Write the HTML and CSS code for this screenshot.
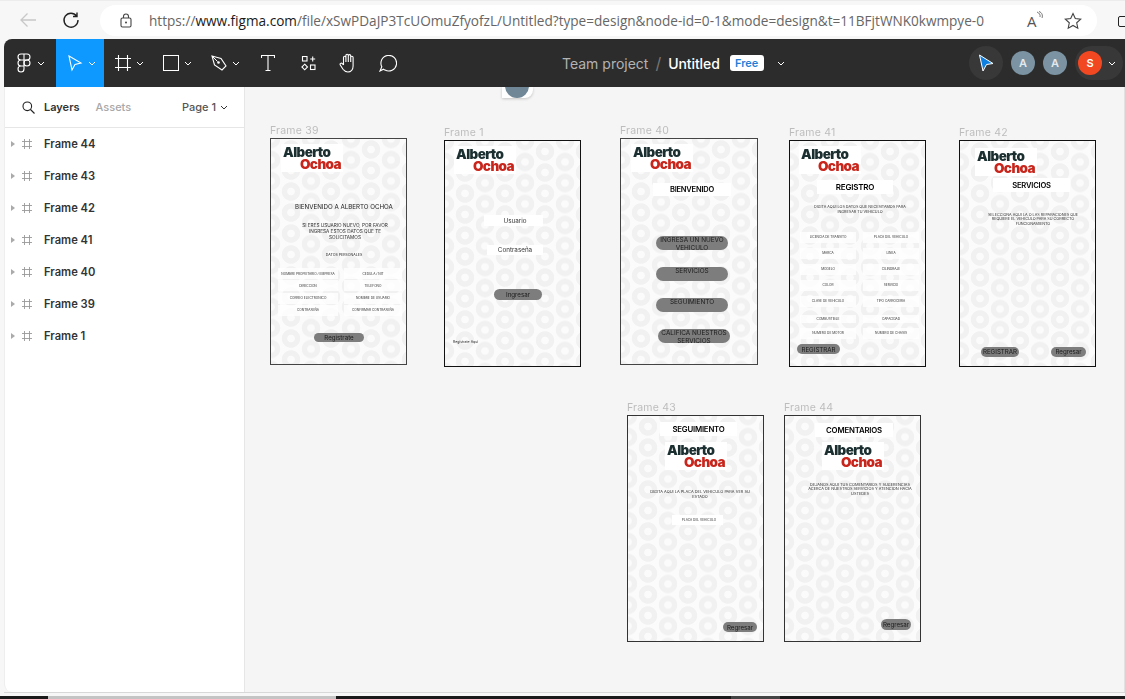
FILE: index.html
```html
<!DOCTYPE html>
<html lang="es">
<head>
<meta charset="UTF-8" />
<title>Untitled - Figma</title>
<link rel="stylesheet" href="styles.css">
</head>
<body>

<div class="browser-bar">
  <svg class="nav-back" width="18" height="16" viewBox="0 0 18 16"><path d="M17 8H2M8.500 1.500L2 8l6.500 6.500" fill="none" stroke="#c8c8c8" stroke-width="1.300"/></svg>
  <svg class="nav-reload" width="18" height="18" viewBox="0 0 18 18"><path d="M14.600 5A7 7 0 1 0 16 9M15 1.500V5.500H11" fill="none" stroke="#222" stroke-width="1.400"/></svg>
  <div class="url-pill">
    <svg class="lock" width="12" height="15" viewBox="0 0 12 15"><rect x="1" y="5" width="10" height="9" rx="1.500" fill="none" stroke="#444" stroke-width="1.100"/><path d="M3.500 5V3.500a2.500 2.500 0 0 1 5 0V5" fill="none" stroke="#444" stroke-width="1.100"/><circle cx="6" cy="9.500" r="1" fill="#444"/></svg>
    <span class="url">https://<b>www.figma.com</b>/file/xSwPDaJP3TcUOmuZfyofzL/Untitled?type=design&amp;node-id=0-1&amp;mode=design&amp;t=11BFjtWNK0kwmpye-0</span>
    <span class="read-aloud">A<svg width="7" height="9" viewBox="0 0 7 9"><path d="M1 1c2.500 1 3.500 3 3 5M3 .5c3 1 4 4 3 6.500" fill="none" stroke="#555" stroke-width=".8"/></svg></span>
    <svg class="star" width="18" height="18" viewBox="0 0 18 18"><path d="M9 1.500l2.300 5 5.400.6-4 3.700 1.100 5.400L9 13.500l-4.800 2.700 1.100-5.400-4-3.700 5.400-.6z" fill="none" stroke="#444" stroke-width="1.100"/></svg>
  </div>
  <div class="tabs-edge"></div>
</div>

<div class="app">
  <header class="toolbar">
    <div class="tools">
      <div class="tool tool-main">
        <svg width="14" height="20" viewBox="0 0 14 20"><g fill="none" stroke="#fff" stroke-width="1.100"><path d="M7 1H4a3 3 0 0 0 0 6h3zM7 1h3a3 3 0 0 1 0 6H7zM7 7H4a3 3 0 0 0 0 6h3zM7 13H4a3 3 0 1 0 3 3z"/><circle cx="10" cy="10" r="3"/></g></svg>
        <svg class="chev" width="8" height="5" viewBox="0 0 8 5"><path d="M1 1l3 3 3-3" fill="none" stroke="#fff"/></svg>
      </div>
      <div class="tool tool-wide tool-on">
        <svg width="16" height="18" viewBox="0 0 16 18"><path d="M2 2l12 7-6 1.500L5 16z" fill="none" stroke="#fff" stroke-width="1.100"/></svg>
        <svg class="chev" width="8" height="5" viewBox="0 0 8 5"><path d="M1 1l3 3 3-3" fill="none" stroke="#fff"/></svg>
      </div>
      <div class="tool tool-wide">
        <svg width="16" height="16" viewBox="0 0 16 16"><path d="M3.500 0v16M12.500 0v16M0 3.500h16M0 12.500h16" stroke="#fff" stroke-width="1.100"/></svg>
        <svg class="chev" width="8" height="5" viewBox="0 0 8 5"><path d="M1 1l3 3 3-3" fill="none" stroke="#fff"/></svg>
      </div>
      <div class="tool tool-wide">
        <svg width="16" height="16" viewBox="0 0 16 16"><rect x=".5" y=".5" width="15" height="15" fill="none" stroke="#fff"/></svg>
        <svg class="chev" width="8" height="5" viewBox="0 0 8 5"><path d="M1 1l3 3 3-3" fill="none" stroke="#fff"/></svg>
      </div>
      <div class="tool tool-wide">
        <svg width="16" height="16" viewBox="0 0 16 16"><path d="M1 1l9 2.500 5 7.500-4 4-7.500-5z" fill="none" stroke="#fff" stroke-width="1.100"/><path d="M1 1l5.500 5.500" stroke="#fff"/><circle cx="7.500" cy="7.500" r="1.300" fill="#fff"/></svg>
        <svg class="chev" width="8" height="5" viewBox="0 0 8 5"><path d="M1 1l3 3 3-3" fill="none" stroke="#fff"/></svg>
      </div>
      <div class="tool tool-narrow">
        <svg width="14" height="16" viewBox="0 0 14 16"><path d="M.5 3V.5h13V3M7 .5v15M4.500 15.500h5" fill="none" stroke="#fff" stroke-width="1.100"/></svg>
      </div>
      <div class="tool tool-narrow">
        <svg width="15" height="15" viewBox="0 0 15 15"><g fill="none" stroke="#fff" stroke-width="1.100"><rect x="1.500" y=".5" width="4.500" height="4.500"/><rect x="9.500" y="9" width="4.500" height="4.500"/><path d="M3.700 8.200l2.800 2.800-2.800 2.800L.9 11zM11.700.5v5M9.200 3h5"/></g></svg>
      </div>
      <div class="tool tool-narrow">
        <svg width="18" height="20" viewBox="0 0 18 20"><path d="M4.500 12V4.500a1.200 1.200 0 0 1 2.400 0V9M6.900 9V2.500a1.200 1.200 0 0 1 2.400 0V9M9.300 9V2.800a1.200 1.200 0 0 1 2.400 0V9M11.700 9V4.500a1.200 1.200 0 0 1 2.400 0V13c0 3.500-2.200 6-5.200 6-2.300 0-3.600-.9-4.900-2.700L1.300 12c-.8-1.300 1-2.500 2-1.400L4.500 12" fill="none" stroke="#fff" stroke-width="1.100"/></svg>
      </div>
      <div class="tool tool-narrow">
        <svg width="18" height="17" viewBox="0 0 18 17"><path d="M1 16l1.800-4.300A7.800 7.800 0 1 1 6 15a8 8 0 0 1-1.500-.8L1 16z" fill="none" stroke="#fff" stroke-width="1.100"/></svg>
      </div>
    </div>

    <div class="doc-title">
      <span class="project">Team project</span>
      <span class="slash">/</span>
      <span class="file-name">Untitled</span>
      <span class="plan">Free</span>
      <svg class="chev" width="8" height="5" viewBox="0 0 8 5"><path d="M1 1l3 3 3-3" fill="none" stroke="#fff"/></svg>
    </div>

    <div class="people">
      <div class="cursor-chip">
        <svg width="16" height="18" viewBox="0 0 16 18"><path d="M1.500 1L15 9.500 8.500 10.500 5 17z" fill="#0d7fe0" stroke="#fff" stroke-width="1"/></svg>
      </div>
      <span class="avatar">A</span>
      <span class="avatar">A</span>
      <div class="me-chip">
        <span class="avatar avatar-me">S</span>
        <svg class="chev" width="8" height="5" viewBox="0 0 8 5"><path d="M1 1l3 3 3-3" fill="none" stroke="#fff"/></svg>
      </div>
    </div>
  </header>

  <div class="main">
    <aside class="panel">
      <div class="panel-head">
        <svg class="search" width="13" height="13" viewBox="0 0 13 13"><circle cx="5.300" cy="5.300" r="4.300" fill="none" stroke="#222" stroke-width="1.100"/><path d="M8.500 8.500L12.500 12.500" stroke="#222" stroke-width="1.100"/></svg>
        <span class="tab tab-on">Layers</span>
        <span class="tab">Assets</span>
        <span class="page-pick">Page 1
          <svg width="8" height="5" viewBox="0 0 8 5"><path d="M1 1l3 3 3-3" fill="none" stroke="#333"/></svg>
        </span>
      </div>
      <ul class="layers">
        <li><i class="caret"></i><svg width="10" height="10" viewBox="0 0 10 10"><path d="M2.500 0v10M7.500 0v10M0 2.500h10M0 7.500h10" stroke="#999" stroke-width=".9"/></svg>Frame 44</li>
        <li><i class="caret"></i><svg width="10" height="10" viewBox="0 0 10 10"><path d="M2.500 0v10M7.500 0v10M0 2.500h10M0 7.500h10" stroke="#999" stroke-width=".9"/></svg>Frame 43</li>
        <li><i class="caret"></i><svg width="10" height="10" viewBox="0 0 10 10"><path d="M2.500 0v10M7.500 0v10M0 2.500h10M0 7.500h10" stroke="#999" stroke-width=".9"/></svg>Frame 42</li>
        <li><i class="caret"></i><svg width="10" height="10" viewBox="0 0 10 10"><path d="M2.500 0v10M7.500 0v10M0 2.500h10M0 7.500h10" stroke="#999" stroke-width=".9"/></svg>Frame 41</li>
        <li><i class="caret"></i><svg width="10" height="10" viewBox="0 0 10 10"><path d="M2.500 0v10M7.500 0v10M0 2.500h10M0 7.500h10" stroke="#999" stroke-width=".9"/></svg>Frame 40</li>
        <li><i class="caret"></i><svg width="10" height="10" viewBox="0 0 10 10"><path d="M2.500 0v10M7.500 0v10M0 2.500h10M0 7.500h10" stroke="#999" stroke-width=".9"/></svg>Frame 39</li>
        <li><i class="caret"></i><svg width="10" height="10" viewBox="0 0 10 10"><path d="M2.500 0v10M7.500 0v10M0 2.500h10M0 7.500h10" stroke="#999" stroke-width=".9"/></svg>Frame 1</li>
      </ul>
    </aside>

    <main class="canvas">
      <div class="peek"><span></span></div>

      <section class="frame f39">
        <span class="frame-label">Frame 39</span>
        <div class="logo"><span>Alberto</span><span class="red">Ochoa</span></div>
        <p class="welcome">BIENVENIDO A ALBERTO OCHOA</p>
        <p class="note">SI ERES USUARIO NUEVO, POR FAVOR INGRESA ESTOS DATOS QUE TE SOLICITAMOS</p>
        <p class="group">DATOS PERSONALES</p>
        <div class="fields">
          <span>NOMBRE PROPIETARIO / EMPRESA</span><span>CEDULA / NIT</span>
          <span>DIRECCION</span><span>TELEFONO</span>
          <span>CORREO ELECTRONICO</span><span>NOMBRE DE USUARIO</span>
          <span>CONTRASEÑA</span><span>CONFIRMAR CONTRASEÑA</span>
        </div>
        <div class="pill">Registrate</div>
      </section>

      <section class="frame f1">
        <span class="frame-label">Frame 1</span>
        <div class="logo"><span>Alberto</span><span class="red">Ochoa</span></div>
        <div class="input user">Usuario</div>
        <div class="input pass">Contraseña</div>
        <div class="pill">Ingresar</div>
        <p class="signup">Registrate Aqui</p>
      </section>

      <section class="frame f40">
        <span class="frame-label">Frame 40</span>
        <div class="logo"><span>Alberto</span><span class="red">Ochoa</span></div>
        <div class="title">BIENVENIDO</div>
        <div class="pill menu">INGRESA UN NUEVO VEHICULO</div>
        <div class="pill menu">SERVICIOS</div>
        <div class="pill menu">SEGUIMIENTO</div>
        <div class="pill menu last">CALIFICA NUESTROS SERVICIOS</div>
      </section>

      <section class="frame f41">
        <span class="frame-label">Frame 41</span>
        <div class="logo"><span>Alberto</span><span class="red">Ochoa</span></div>
        <div class="title">REGISTRO</div>
        <p class="note">DIGITA AQUI LOS DATOS QUE NECESITAMOS PARA INGRESAR TU VEHICULO</p>
        <div class="fields">
          <span>LICENCIA DE TRANSITO</span><span>PLACA DEL VEHICULO</span>
          <span>MARCA</span><span>LINEA</span>
          <span>MODELO</span><span>CILINDRAJE</span>
          <span>COLOR</span><span>SERVICIO</span>
          <span>CLASE DE VEHICULO</span><span>TIPO CARROCERIA</span>
          <span>COMBUSTIBLE</span><span>CAPACIDAD</span>
          <span>NUMERO DE MOTOR</span><span>NUMERO DE CHASIS</span>
        </div>
        <div class="pill">REGISTRAR</div>
      </section>

      <section class="frame f42">
        <span class="frame-label">Frame 42</span>
        <div class="logo"><span>Alberto</span><span class="red">Ochoa</span></div>
        <div class="title">SERVICIOS</div>
        <p class="note">SELECCIONA AQUI LA O LAS REPARACIONES QUE REQUIERE EL VEHICULO PARA SU CORRECTO FUNCIONAMIENTO</p>
        <div class="actions">
          <div class="pill">REGISTRAR</div>
          <div class="pill back">Regresar</div>
        </div>
      </section>

      <section class="frame f43">
        <span class="frame-label">Frame 43</span>
        <div class="title">SEGUIMIENTO</div>
        <div class="logo"><span>Alberto</span><span class="red">Ochoa</span></div>
        <p class="note">DIGITA AQUI LA PLACA DEL VEHICULO PARA VER SU ESTADO</p>
        <div class="input plate">PLACA DEL VEHICULO</div>
        <div class="pill">Regresar</div>
      </section>

      <section class="frame f44">
        <span class="frame-label">Frame 44</span>
        <div class="title">COMENTARIOS</div>
        <div class="logo"><span>Alberto</span><span class="red">Ochoa</span></div>
        <p class="note">DEJANOS AQUI TUS COMENTARIOS Y SUGERENCIAS ACERCA DE NUESTROS SERVICIOS Y ATENCION HACIA USTEDES</p>
        <div class="pill">Regresar</div>
      </section>
    </main>
  </div>
</div>

<div class="taskbar">
  <span class="task-open"></span>
  <span class="task-hover"></span>
</div>

</body>
</html>
```

FILE: styles.css
```css
* { box-sizing: border-box; }
html, body { height: 100%; }
body {
  margin: 0;
  height: 699px;
  overflow: hidden;
  display: flex;
  flex-direction: column;
  background: #f7f7f7;
  font-family: Inter, "Liberation Sans", sans-serif;
}
p { margin: 0; }
svg { flex: none; }

/* browser chrome */
.browser-bar {
  height: 39px;
  flex: none;
  display: flex;
  align-items: flex-start;
  background: #f7f7f7;
  border-top: 1px solid #ececec;
  padding-top: 4px;
}
.nav-back { margin: 7px 0 0 19px; }
.nav-reload { margin: 6px 0 0 25px; }
.url-pill {
  margin-left: 20px;
  width: 997px;
  height: 31px;
  flex: none;
  display: flex;
  align-items: center;
  background: #fff;
  border-radius: 16px;
}
.lock { margin-left: 20px; }
.url {
  margin-left: 17px;
  font-family: "Open Sans", "Noto Sans", sans-serif;
  font-size: 13.600px;
  color: #666;
  white-space: nowrap;
}
.url b { font-weight: 400; color: #1a1a1a; }
.read-aloud {
  margin-left: 43px;
  display: flex;
  font-family: "Open Sans", sans-serif;
  font-size: 15px;
  color: #555;
}
.star { margin-left: 21px; }
.tabs-edge {
  margin: 11px 0 0 21px;
  width: 12px;
  height: 11px;
  border: 1px solid #222;
  border-radius: 2px;
  flex: none;
}

/* figma window */
.app {
  margin-left: 4px;
  height: 654px;
  flex: none;
  display: flex;
  flex-direction: column;
}
.toolbar {
  position: relative;
  height: 48px;
  flex: none;
  display: flex;
  justify-content: space-between;
  background: #2c2c2c;
  border-radius: 8px 0 0 0;
  color: #fff;
}
.tools { display: flex; }
.tool {
  height: 48px;
  display: flex;
  align-items: center;
  justify-content: center;
}
.tool-main { width: 52px; gap: 6px; padding-left: 2px; }
.tool-wide { width: 48px; gap: 5px; padding-left: 2px; }
.tool-narrow { width: 40px; }
.tool-on { background: #0d99ff; }
.chev { flex: none; }

.doc-title {
  position: absolute;
  left: 558px;
  top: 0;
  height: 48px;
  display: flex;
  align-items: center;
  font-size: 14px;
  white-space: nowrap;
}
.project { color: #b3b3b3; }
.slash { margin: 0 7px; color: #777; font-size: 16px; }
.file-name { font-weight: 500; letter-spacing: -.1px; }
.plan {
  margin: 0 13px 0 10px;
  width: 34px;
  height: 16px;
  display: flex;
  align-items: center;
  justify-content: center;
  background: #fff;
  border-radius: 3px;
  color: #1f7fd6;
  font-size: 11px;
  font-weight: 600;
}

.people {
  display: flex;
  align-items: center;
  gap: 8px;
  padding-right: 2px;
}
.cursor-chip {
  width: 34px;
  height: 34px;
  display: flex;
  align-items: center;
  justify-content: center;
  background: #383838;
  border-radius: 50%;
}
.avatar {
  width: 24px;
  height: 24px;
  display: flex;
  align-items: center;
  justify-content: center;
  background: #7b93a3;
  border-radius: 50%;
  color: #e4e9ec;
  font-size: 11px;
  font-weight: 600;
}
.avatar-me { background: #f24822; color: #fff; }
.me-chip {
  width: 48px;
  height: 34px;
  display: flex;
  align-items: center;
  gap: 6px;
  padding-left: 3px;
  background: #383838;
  border-radius: 17px;
}

.main {
  flex: 1;
  display: flex;
  min-height: 0;
  border-bottom: 1px solid #d8d8d8;
}

/* left panel */
.panel {
  width: 241px;
  flex: none;
  background: #fff;
  border-right: 1px solid #e6e6e6;
  border-left: 1px solid #eee;
  border-radius: 0 0 0 8px;
}
.panel-head {
  height: 41px;
  display: flex;
  align-items: center;
  border-bottom: 1px solid #e6e6e6;
  font-size: 11px;
}
.search { margin-left: 17px; }
.tab { color: #a8a8a8; font-weight: 500; margin-left: 16px; }
.tab-on { color: #333; font-weight: 600; margin-left: 9px; }
.page-pick {
  margin-left: auto;
  margin-right: 16px;
  display: flex;
  align-items: center;
  gap: 4px;
  color: #555;
  font-weight: 500;
}
.layers {
  list-style: none;
  margin: 0;
  padding: 0;
}
.layers li {
  height: 32px;
  display: flex;
  align-items: center;
  font-size: 11.200px;
  font-weight: 600;
  color: #333;
}
.layers svg { margin: 0 12px 0 7px; }
.caret {
  margin-left: 6px;
  width: 0;
  height: 0;
  border-left: 4px solid #aaa;
  border-top: 3px solid transparent;
  border-bottom: 3px solid transparent;
}

/* canvas, frames sit freely on it */
.canvas {
  position: relative;
  flex: 1;
  background: #f5f5f5;
  border-right: 1px solid #e2e2e2;
}
.peek {
  position: absolute;
  left: 257px;
  top: 0;
  width: 31px;
  height: 11px;
  overflow: hidden;
  background: #fff;
  border-radius: 0 0 8px 0;
  box-shadow: 0 1px 3px rgba(0, 0, 0, .2);
}
.peek span {
  display: block;
  margin: -13px 0 0 3px;
  width: 24px;
  height: 24px;
  background: #6f8797;
  border-radius: 50%;
}

.frame {
  position: absolute;
  width: 137px;
  height: 227px;
  display: flex;
  flex-direction: column;
  align-items: flex-start;
  border: 1px solid #111;
  background-color: #fbfbfb;
  background-image:
    radial-gradient(circle, #fbfbfb 3.400px, #f1f1f1 4.200px, #f1f1f1 8.800px, transparent 9.600px),
    radial-gradient(circle, #fbfbfb 3.400px, #f1f1f1 4.200px, #f1f1f1 8.800px, transparent 9.600px);
  background-size: 40px 21px;
  background-position: 0 0, 20px 10.500px;
  color: #222;
  text-align: center;
  filter: blur(.3px);
}
.frame-label {
  position: absolute;
  left: -1px;
  top: -15px;
  font-size: 10.500px;
  color: #bdbdbd;
  letter-spacing: .2px;
  white-space: nowrap;
}
.f39 { left: 25px; top: 51px; border-color: #444; }
.f1 { left: 199px; top: 53px; }
.f40 { left: 375px; top: 51px; width: 138px; border-color: #444; }
.f41 { left: 544px; top: 53px; }
.f42 { left: 714px; top: 53px; }
.f43 { left: 382px; top: 328px; border-color: #333; }
.f44 { left: 539px; top: 328px; border-color: #333; }

.logo {
  width: 62px;
  height: 28px;
  padding: 2px 0 0 2px;
  display: flex;
  flex-direction: column;
  flex: none;
  background: #fff;
  color: #1b2e30;
  font-size: 13.500px;
  font-weight: 900;
  line-height: 12px;
  letter-spacing: -.6px;
  text-align: left;
}
.logo .red { margin-left: 17px; color: #c8261c; }
.title {
  height: 13px;
  flex: none;
  display: flex;
  align-items: center;
  justify-content: center;
  background: #fff;
  color: #000;
  font-size: 8px;
  font-weight: 600;
  letter-spacing: -.2px;
}
.note { font-size: 3.900px; line-height: 4.800px; color: #333; }
.input {
  flex: none;
  display: flex;
  align-items: center;
  justify-content: center;
  background: #fff;
  color: #333;
  font-size: 6.300px;
}
.pill {
  height: 10px;
  flex: none;
  display: flex;
  align-items: center;
  justify-content: center;
  background: #7d7d7d;
  border-radius: 6px;
  color: #1a1a1a;
  font-size: 6.200px;
  white-space: nowrap;
}
.fields {
  display: grid;
  flex: none;
  font-size: 3.200px;
  color: #333;
}
.fields span {
  display: flex;
  align-items: center;
  justify-content: center;
  background: rgba(255, 255, 255, .75);
  white-space: nowrap;
}

/* frame 39 */
.f39 .logo { margin: 5px 0 0 10px; }
.f39 .welcome { margin: 31px 0 0 18px; width: 110px; font-size: 6.200px; line-height: 8px; white-space: nowrap; }
.f39 .note { margin: 11px 0 0 26px; width: 96px; font-size: 4.700px; line-height: 6px; }
.f39 .group { margin: 12px 0 0 23px; width: 100px; font-size: 3.600px; line-height: 6px; }
.f39 .fields {
  margin: 10px 0 0 7px;
  grid-template-columns: 60px 58px;
  grid-auto-rows: 11px;
  gap: 1.300px 6px;
}
.f39 .pill { margin: 17px 0 0 43px; width: 50px; height: 9px; }

/* frame 1 */
.f1 .logo { margin: 5px 0 0 9px; }
.f1 .user { margin: 41px 0 0 39px; width: 59px; height: 11px; padding-left: 3px; }
.f1 .pass { margin: 19px 0 0 42px; width: 56px; height: 10px; }
.f1 .pill { margin: 34px 0 0 49px; width: 48px; height: 11px; }
.f1 .signup { margin: 40px 0 0 8px; font-size: 3.500px; line-height: 5px; }

/* frame 40 */
.f40 .logo { margin: 5px 0 0 10px; }
.f40 .title { margin: 11px 0 0 32px; width: 78px; font-size: 7.500px; }
.f40 .menu {
  margin: 17px 0 0 35px;
  width: 72px;
  height: 14px;
  align-items: flex-start;
  border-radius: 7px;
  font-size: 6.400px;
  line-height: 8px;
  white-space: normal;
}
.f40 .title + .menu { margin-top: 40px; }
.f40 .last { margin-left: 37px; }

/* frame 41 */
.f41 .logo { margin: 5px 0 0 9px; }
.f41 .title { margin: 6px 0 0 27px; width: 76px; height: 14px; }
.f41 .note { margin: 9.500px 0 0 23px; width: 94px; font-size: 3.750px; line-height: 5px; }
.f41 .fields {
  margin: 18px 0 0 10px;
  grid-template-columns: 56px 56px;
  grid-auto-rows: 11px;
  gap: 5px 7px;
}
.f41 .fields span:nth-child(11),
.f41 .fields span:nth-child(12) { margin-top: 3px; }
.f41 .pill { margin: 5.500px 0 0 7px; width: 43px; }

/* frame 42 */
.f42 .logo { margin: 7px 0 0 15px; }
.f42 .title { margin: 2px 0 0 33px; width: 77px; height: 14px; font-size: 7.600px; }
.f42 .note { margin: 20.500px 0 0 27px; width: 92px; font-size: 3.750px; line-height: 4.600px; }
.actions {
  margin: 120.500px 0 0 21px;
  width: 105px;
  display: flex;
  justify-content: space-between;
}
.actions .pill { width: 38px; }
.actions .back { width: 35px; }

/* frame 43 */
.f43 .title { margin: 6px 0 0 32px; width: 77px; height: 14px; font-size: 7.800px; }
.f43 .logo { margin: 6px 0 0 37px; }
.f43 .note { margin: 18.500px 0 0 19px; width: 106px; font-size: 3.950px; line-height: 5px; }
.f43 .plate { margin: 16.500px 0 0 44px; width: 51px; height: 10px; padding-left: 3px; font-size: 3.200px; }
.f43 .pill { margin: 97px 0 0 95px; width: 34px; }

/* frame 44 */
.f44 .title { margin: 7px 0 0 30px; width: 78px; height: 14px; font-size: 7.800px; }
.f44 .logo { margin: 5px 0 0 37px; }
.f44 .note { margin: 12.600px 0 0 23px; width: 104px; }
.f44 .pill { margin: 122px 0 0 96px; width: 30px; height: 11px; }

/* bottom of the desktop */
.taskbar {
  margin-top: 3px;
  height: 3px;
  flex: none;
  display: flex;
  padding-left: 48px;
  background: #1a1a1a;
}
.task-open { width: 288px; background: #c4c4c4; }
.task-hover { margin-left: 395px; width: 49px; background: #444; }
```
